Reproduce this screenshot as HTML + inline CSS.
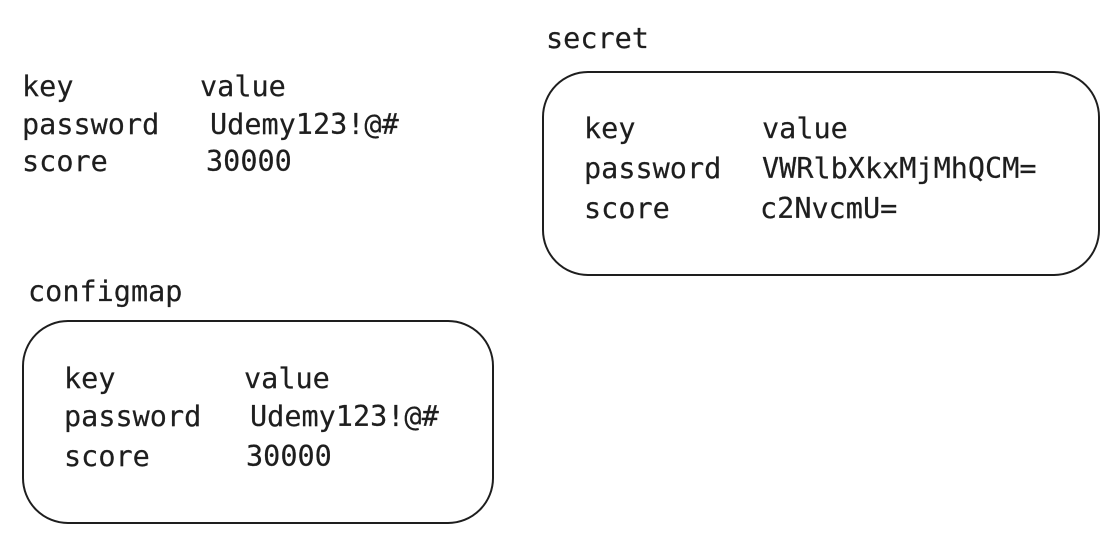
<!DOCTYPE html>
<html><head><style>
body{margin:0;width:1119px;height:544px;background:#fff;position:relative;overflow:hidden;font-family:"DejaVu Sans Mono","Liberation Mono",monospace;font-size:28.5px;color:#1e1e1e}
.t{position:absolute;line-height:38px;white-space:pre;-webkit-text-stroke:0.2px #1e1e1e}
.box{position:absolute;border:2px solid #1e1e1e;border-radius:46px;box-sizing:border-box}
</style></head><body>
<div class="t" style="left:22px;top:68px">key</div>
<div class="t" style="left:200px;top:68px">value</div>
<div class="t" style="left:22px;top:106px">password</div>
<div class="t" style="left:210px;top:106px">Udemy123!@#</div>
<div class="t" style="left:22px;top:143px">score</div>
<div class="t" style="left:206px;top:143px">30000</div>

<div class="t" style="left:546px;top:20px">secret</div>
<div class="box" style="left:542px;top:71px;width:558px;height:205px"></div>
<div class="t" style="left:584px;top:110px">key</div>
<div class="t" style="left:762px;top:110px">value</div>
<div class="t" style="left:584px;top:150px">password</div>
<div class="t" style="left:762px;top:150px">VWRlbXkxMjMhQCM=</div>
<div class="t" style="left:584px;top:190px">score</div>
<div class="t" style="left:760px;top:190px">c2NvcmU=</div>

<div class="t" style="left:28px;top:273px">configmap</div>
<div class="box" style="left:22px;top:320px;width:472px;height:204px"></div>
<div class="t" style="left:64px;top:360px">key</div>
<div class="t" style="left:244px;top:360px">value</div>
<div class="t" style="left:64px;top:398px">password</div>
<div class="t" style="left:250px;top:398px">Udemy123!@#</div>
<div class="t" style="left:64px;top:438px">score</div>
<div class="t" style="left:246px;top:438px">30000</div>
</body></html>
